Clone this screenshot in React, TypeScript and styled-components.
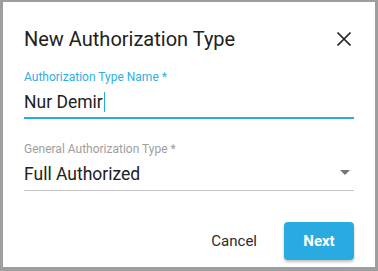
import React from "react";
import styled, { createGlobalStyle } from "styled-components";

const GlobalStyle = createGlobalStyle`
  html, body {
    margin: 0;
    padding: 0;
    background: #9e9e9e;
    font-family: Roboto, "Liberation Sans", Arial, sans-serif;
  }
`;

const Dialog = styled.div`
  box-sizing: border-box;
  margin: 2px 3px 0 3px;
  width: 372px;
  height: 265px;
  background: #fff;
  padding: 25px 21px 0;
  display: flex;
  flex-direction: column;
`;

const Header = styled.div`
  display: flex;
  align-items: center;
  justify-content: space-between;
  height: 24px;
  margin-bottom: 19px;
`;

const Title = styled.h2`
  margin: 0;
  font-size: 20px;
  line-height: 24px;
  font-weight: 400;
  color: #212121;
`;

const CloseButton = styled.button`
  border: 0;
  background: none;
  padding: 0;
  width: 24px;
  height: 24px;
  margin-right: -2px;
  color: #212121;
  cursor: pointer;
  svg { display: block; }
`;

const Field = styled.div<{ $focused?: boolean }>`
  display: flex;
  flex-direction: column;
  border-bottom: ${(p) => (p.$focused ? "2px solid #29abe2" : "1px solid #c4c4c4")};
  padding-bottom: ${(p) => (p.$focused ? "4px" : "5px")};
  margin-bottom: ${(p) => (p.$focused ? "23px" : "31px")};
`;

const Label = styled.label<{ $focused?: boolean }>`
  font-size: 12px;
  line-height: 14px;
  color: ${(p) => (p.$focused ? "#2eaee5" : "#9e9e9e")};
`;

const Value = styled.div`
  font-size: 17.5px;
  line-height: 22px;
  height: 22px;
  color: #212121;
  margin-top: 7px;
  display: flex;
  align-items: center;
  justify-content: space-between;
`;

const Caret = styled.span`
  display: inline-block;
  width: 1px;
  height: 20px;
  background: #29abe2;
  margin-left: 1px;
  vertical-align: -4px;
`;

const Arrow = styled.svg`
  width: 24px;
  height: 24px;
  color: #757575;
  margin-right: -3px;
  margin-top: -4px;
`;

const Actions = styled.div`
  display: flex;
  justify-content: flex-end;
  align-items: center;
  gap: 19px;
`;

const TextButton = styled.button`
  border: 0;
  background: none;
  font-family: inherit;
  font-size: 15px;
  font-weight: 400;
  color: #2b2b2b;
  padding: 8px;
  cursor: pointer;
`;

const PrimaryButton = styled.button`
  border: 0;
  border-radius: 4px;
  background: #29abe2;
  color: #fff;
  font-family: inherit;
  font-size: 15px;
  font-weight: 700;
  width: 70px;
  height: 38px;
  box-shadow: 0 2px 3px rgba(0, 0, 0, 0.25);
  cursor: pointer;
`;

export default function App() {
  return (
    <>
      <GlobalStyle />
      <Dialog>
        <Header>
          <Title>New Authorization Type</Title>
          <CloseButton aria-label="close">
            <svg viewBox="0 0 24 24" width="24" height="24">
              <path
                stroke="currentColor"
                strokeWidth="1.7"
                fill="none"
                d="M5.5 5.5 18.5 18.5 M18.5 5.5 5.5 18.5"
              />
            </svg>
          </CloseButton>
        </Header>
        <Field $focused>
          <Label $focused>Authorization Type Name *</Label>
          <Value>
            <span>
              Nur Demir
              <Caret />
            </span>
          </Value>
        </Field>
        <Field>
          <Label>General Authorization Type *</Label>
          <Value>
            <span>Full Authorized</span>
            <Arrow viewBox="0 0 24 24">
              <path fill="currentColor" d="M7 10l5 5 5-5z" />
            </Arrow>
          </Value>
        </Field>
        <Actions>
          <TextButton>Cancel</TextButton>
          <PrimaryButton>Next</PrimaryButton>
        </Actions>
      </Dialog>
    </>
  );
}
